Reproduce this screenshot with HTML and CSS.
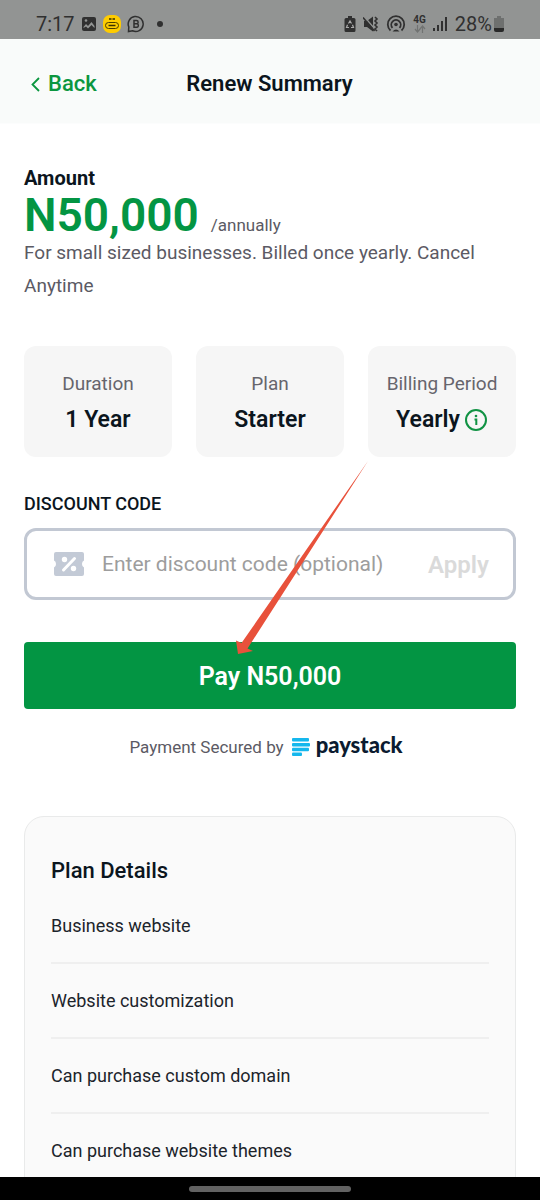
FILE: index.html
```html
<!DOCTYPE html>
<html lang="en">
<head>
<meta charset="utf-8">
<meta name="viewport" content="width=device-width, initial-scale=1">
<title>Renew Summary</title>
<link rel="stylesheet" href="styles.css">
</head>
<body>
<div class="status">
  <div class="status-group">
    <span class="time">7:17</span>
    <svg width="16" height="16" viewBox="0 0 16 16"><rect x="1" y="1" width="14" height="14" rx="2" fill="#303030"/><path d="M2.500 11l2.500-3 2 2 3.500-4 3 4v2l-3-3-3.500 3.500L5 10.500 2.500 12z" fill="#929493"/><circle cx="5" cy="4.500" r="1.300" fill="#929493"/></svg>
    <svg width="18" height="18" viewBox="0 0 18 18"><rect width="18" height="18" rx="7" fill="#fc0"/><rect x="2.500" y="7.500" width="13" height="6" rx="3" fill="none" stroke="#4a3c00"/><path d="M6 4h2.500M9.500 4H12M5.500 10.500h7" stroke="#3a2f00" stroke-width="1.500" fill="none"/></svg>
    <svg width="18" height="18" viewBox="0 0 18 18" fill="none" stroke="#303030"><path d="M1.500 16.500l.3-4.500A7.500 7.500 0 1 1 5.500 15.800z" stroke-width="1.500"/><path d="M7 5.500h2.500a1.600 1.600 0 0 1 0 3.300H7zm0 3.300h3a1.800 1.800 0 0 1 0 3.500H7z" stroke-width="1.500"/></svg>
    <span class="dot"></span>
  </div>
  <div class="status-group status-right">
    <svg width="12" height="16" viewBox="0 0 12 16"><path d="M4 0h4v2h2q1.500 0 1.500 1.500v11q0 1.500-1.500 1.500H2Q.5 16 .5 14.500v-11Q.5 2 2 2h2z" fill="#303030"/><path d="M4.500 7.500L6 5l1.500 2.500M8.500 8.800L9.500 11.500H7M5 11.500H2.500l1-2.700" fill="none" stroke="#aaa" stroke-width="1.200"/></svg>
    <svg width="16" height="16" viewBox="0 0 16 16"><path d="M1 5h3l6-4.500v15L4 11H1z" fill="#303030"/><path d="M1.500 1l12 14" stroke="#929493" stroke-width="1.500"/><path d="M0 1.500l11.500 13.500M12 1l2 2-2 2 2 2-2 2 2 2-2 2 2 2" stroke="#303030" stroke-width="1.600" fill="none"/></svg>
    <svg width="20" height="18" viewBox="0 0 20 18" fill="none" stroke="#303030" stroke-width="1.800"><path d="M4.500 15.500a8.200 8.200 0 1 1 11 0M6.500 12.800a4.700 4.700 0 1 1 7 0"/><circle cx="10" cy="9.500" r="1.800" fill="#303030" stroke="none"/><path d="M6.500 16.500q3.500-4 7 0z" fill="#303030" stroke="none"/></svg>
    <span class="network">4G<svg width="12" height="8" viewBox="0 0 12 8" fill="none" stroke="#717372" stroke-width="1.200"><path d="M3.500 0v6.500M1 4l2.500 3L6 4M8.500 8V1.500M6 4l2.500-3L11 4"/></svg></span>
    <svg width="15" height="16" viewBox="0 0 15 16" fill="#303030"><path d="M0 12h2v3H0zM4 9h2v6H4zM8 5h2v10H8zM12 1h2v14h-2z"/></svg>
    <span class="battery-text">28%<svg width="10" height="16" viewBox="0 0 10 16"><path d="M3 0h4v2h3v11H0V2h3z" fill="#6e706f"/><path d="M0 12h10v2q0 2-2 2H2q-2 0-2-2z" fill="#292929"/></svg></span>
  </div>
</div>
<header class="header">
  <button class="back" type="button"><svg width="9" height="15" viewBox="0 0 9 15" fill="none" stroke="#0b963f" stroke-width="1.800"><path d="M8 1L1.500 7.500 8 14"/></svg>Back</button>
  <h1 class="header-title">Renew Summary</h1>
</header>
<main class="content">
  <section class="amount">
    <h2 class="amount-label">Amount</h2>
    <div class="price"><strong class="price-value">N50,000</strong><span class="price-unit">/annually</span></div>
    <p class="description">For small sized businesses. Billed once yearly. Cancel Anytime</p>
  </section>
  <dl class="stats">
    <div class="stat"><dt>Duration</dt><dd>1 Year</dd></div>
    <div class="stat"><dt>Plan</dt><dd>Starter</dd></div>
    <div class="stat"><dt>Billing Period</dt><dd>Yearly<svg width="24" height="24" viewBox="0 0 24 24" fill="none" stroke="#109243"><circle cx="12" cy="12" r="10" stroke-width="2"/><path d="M10.500 11.500h1.800V17" stroke-width="2"/><circle cx="12" cy="8" r="1.300" fill="#109243" stroke="none"/></svg></dd></div>
  </dl>
  <form class="checkout">
    <label class="code-label" for="code">DISCOUNT CODE</label>
    <div class="field">
      <svg width="30" height="24" viewBox="0 0 30 24"><path d="M2 0h26q2 0 2 2v6.500q-2 .5-2 3.500t2 3.500V22q0 2-2 2H2q-2 0-2-2v-6.500q2-.5 2-3.500T0 8.500V2q0-2 2-2z" fill="#c3cad6"/><path d="M9.500 18L20.500 6.500" stroke="#fff" stroke-width="3" stroke-linecap="round"/><circle cx="10.500" cy="7.500" r="2.700" fill="#fff"/><circle cx="19.500" cy="16.500" r="2.700" fill="#fff"/></svg>
      <input class="code" id="code" type="text" placeholder="Enter discount code (optional)">
      <button class="apply" type="button">Apply</button>
    </div>
    <button class="pay" type="submit">Pay N50,000</button>
    <svg class="arrow" width="134" height="194" viewBox="0 0 134 194"><path d="M133 0L12.500 187.500 18 190 3 193 1 179.500 6.500 182z" fill="#e8513b"/></svg>
  </form>
  <div class="secured"><span>Payment Secured by</span>
    <span class="paystack"><svg width="18" height="18" viewBox="0 0 18 18" fill="#15b7ed"><rect width="17" height="3.500" rx="1"/><rect y="5" width="18" height="3.500" rx="1"/><rect y="9.800" width="17" height="3.500" rx="1"/><rect y="14.500" width="10" height="3.500" rx="1"/></svg><span class="paystack-name">paystack</span></span>
  </div>
  <section class="details">
    <h2 class="details-title">Plan Details</h2>
    <ul class="features">
      <li>Business website</li>
      <li>Website customization</li>
      <li>Can purchase custom domain</li>
      <li>Can purchase website themes</li>
    </ul>
  </section>
</main>
<div class="nav"><span class="handle"></span></div>
</body>
</html>
```
FILE: styles.css
```css
* { box-sizing: border-box; }
body {
  margin: 0;
  height: 100vh;
  display: flex;
  flex-direction: column;
  overflow: hidden;
  background: #fff;
  color: #0b151d;
  font-family: Roboto, "Liberation Sans", sans-serif;
}
h1, h2, p, ul, dl, dd { margin: 0; padding: 0; }
button, input { font: inherit; border: 0; background: none; padding: 0; }
svg { flex: none; }

.status {
  flex: none;
  height: 39px;
  padding: 8px 36px 0;
  display: flex;
  justify-content: space-between;
  background: #929493;
  color: #303030;
}
.status-group { display: flex; align-items: center; gap: 6px; height: 31px; }
.status-right { gap: 7px; }
.time, .battery-text { font-size: 20px; }
.dot { width: 6px; height: 6px; margin-left: 6px; border-radius: 50%; background: #303030; }
.battery-text { display: flex; align-items: center; gap: 2px; }
.network { display: flex; flex-direction: column; align-items: center; font-size: 10px; font-weight: 700; line-height: 10px; }

.header {
  flex: none;
  height: 85px;
  padding: 6px 32px 0 31px;
  display: grid;
  grid-template-columns: 1fr auto 1fr;
  align-items: center;
  background: #f9fbfa;
  border-bottom: 1px solid #fcfdfd;
}
.back { justify-self: start; display: flex; align-items: center; gap: 8px; color: #0b963f; font-size: 22px; font-weight: 500; line-height: 32px; }
.header-title { font-size: 22px; font-weight: 600; line-height: 32px; }

.content { flex: 1; min-height: 0; overflow: hidden; padding: 42px 24px 0; }
.amount-label { font-size: 20px; font-weight: 700; line-height: 25px; }
.price { display: flex; align-items: baseline; gap: 12px; line-height: 48px; height: 45px; }
.price-value { color: #039543; font-size: 46px; font-weight: 600; }
.price-unit { color: #5b5a64; font-size: 17px; }
.description { color: #5b5a64; font-size: 19px; line-height: 33px; }

.stats { display: grid; grid-template-columns: repeat(3, 1fr); gap: 24px; margin-top: 44px; }
.stat { padding: 22px 0 17px; border-radius: 12px; background: #f6f6f6; text-align: center; }
.stat dt { color: #66656d; font-size: 19px; line-height: 32px; white-space: nowrap; }
.stat dd { display: flex; justify-content: center; align-items: center; gap: 4px; font-size: 23px; font-weight: 600; line-height: 40px; }

.checkout { position: relative; display: flex; flex-direction: column; margin-top: 34px; }
.code-label { font-size: 18px; font-weight: 500; line-height: 26px; }
.field { display: flex; align-items: center; height: 72px; margin-top: 11px; padding: 0 24px 0 27px; border: 3px solid #c2c8d3; border-radius: 12px; }
.code { flex: 1; min-width: 0; margin-left: 18px; color: #0b151d; font-size: 21px; line-height: 30px; outline: 0; }
.code::placeholder { color: #9d9d9d; opacity: 1; }
.apply { padding-top: 2px; color: #dadada; font-size: 24px; font-weight: 600; }
.pay { height: 67px; margin-top: 42px; padding-top: 2px; border-radius: 4px; background: #039543; color: #fff; font-size: 25px; font-weight: 600; }
.arrow { position: absolute; left: 235px; top: -30px; margin-left: -24px; pointer-events: none; }

.secured { display: flex; justify-content: center; align-items: center; gap: 8px; margin-top: 24px; padding-right: 8px; color: #5b5a64; font-size: 17px; line-height: 28px; }
.paystack { display: flex; align-items: center; gap: 6px; color: #0b1b30; font-family: Lato, sans-serif; font-size: 22px; font-weight: 900; }
.paystack-name { line-height: 24px; padding-bottom: 4px; }

.details { margin-top: 55px; padding: 38px 26px; border: 1px solid #e9eaea; border-radius: 20px; background: #fafafa; }
.details-title { font-size: 22px; font-weight: 500; line-height: 32px; }
.features { list-style: none; margin-top: 2px; }
.features li { padding: 21px 0; border-bottom: 2px solid #efefef; color: #1c242b; font-size: 18px; line-height: 31px; }

.nav { flex: none; height: 23px; display: flex; justify-content: center; align-items: center; background: #000; }
.handle { width: 30%; height: 6px; border-radius: 3px; background: #626262; }
```
